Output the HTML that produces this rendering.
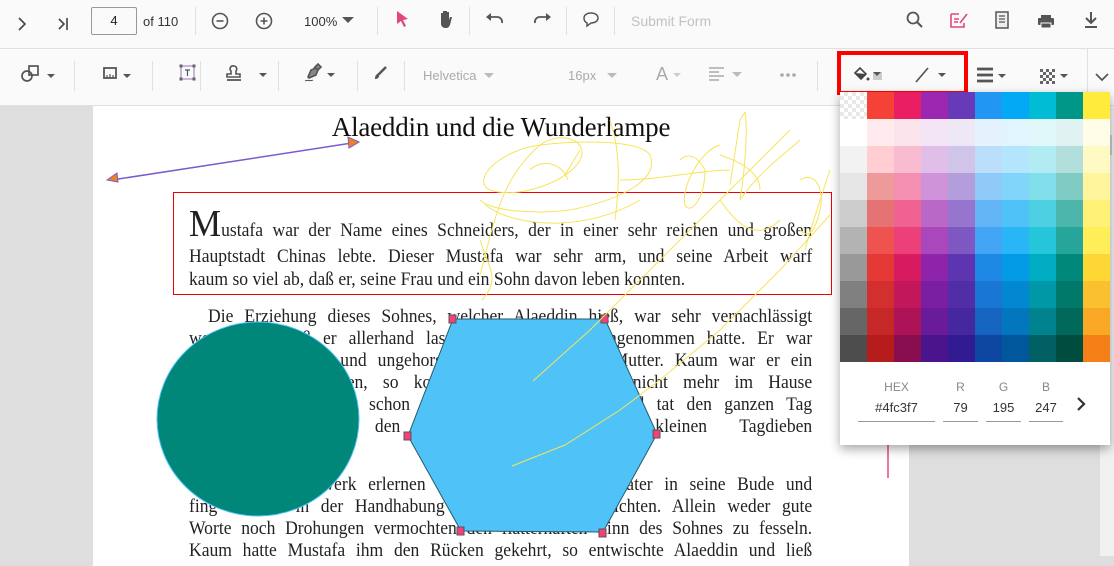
<!DOCTYPE html>
<html><head><meta charset="utf-8"><style>
*{margin:0;padding:0;box-sizing:border-box}
body{width:1114px;height:556px;overflow:hidden;background:#dedede;font-family:"Liberation Sans",sans-serif;position:relative}
.tb1{position:absolute;left:0;top:0;width:1114px;height:49px;background:#fafafa;border-bottom:1px solid #e0e0e0}
.tb2{position:absolute;left:0;top:49px;width:1114px;height:57px;background:#fafafa;border-bottom:1px solid #e0e0e0}
.sep{position:absolute;width:1px;background:#e0e0e0}
.t{position:absolute;font-size:13px;color:#333}
.ic{position:absolute}
.page{position:absolute;left:93px;top:106px;width:816px;height:460px;background:#fff}
.ln{position:absolute;left:189px;width:656px;transform:scaleX(0.95);transform-origin:0 0;font-family:"Liberation Serif",serif;font-size:18.5px;color:#222;text-align:justify;text-align-last:justify;white-space:nowrap;line-height:22px}
.nl{text-align-last:left}
.pal{position:absolute;left:840px;top:92px;width:270px;height:353px;background:#fff;box-shadow:0 4px 10px rgba(0,0,0,.35)}
.grid{display:grid;grid-template-columns:repeat(10,27px);grid-auto-rows:27px}
.lab{position:absolute;font-size:12px;color:#888;text-align:center}
.val{position:absolute;font-size:13px;color:#333;text-align:center;border-bottom:1px solid #999;padding-bottom:6px}
</style></head><body>
<div class="tb1">
<svg class="ic" style="left:14px;top:12px" width="100" height="24"><path d="M5 6l6 6-6 6" stroke="#444" stroke-width="1.6" fill="none"/><path d="M45 7l5 5-5 5M53 6v12" stroke="#444" stroke-width="1.6" fill="none"/></svg>
<div style="position:absolute;left:91px;top:7px;width:46px;height:28px;border:1px solid #999;border-radius:2px;font-size:13px;text-align:center;line-height:26px;color:#222">4</div>
<div class="t" style="left:143px;top:14px">of 110</div>
<div class="sep" style="left:195px;top:7px;height:28px"></div>
<svg class="ic" style="left:210px;top:10px" width="70" height="22"><circle cx="10" cy="11" r="7.5" stroke="#555" stroke-width="1.6" fill="none"/><path d="M6.5 11h7" stroke="#555" stroke-width="1.6"/><circle cx="54" cy="11" r="7.5" stroke="#555" stroke-width="1.6" fill="none"/><path d="M50.5 11h7M54 7.5v7" stroke="#555" stroke-width="1.6"/></svg>
<div class="t" style="left:304px;top:14px">100%</div>
<svg class="ic" style="left:342px;top:17px" width="14" height="8"><path d="M0 0h12l-6 6z" fill="#555"/></svg>
<div class="sep" style="left:377px;top:7px;height:28px"></div>
<svg class="ic" style="left:395px;top:10px" width="16" height="20"><path d="M2 1l11 8-5 1 3 6-2 1-3-6-4 3z" fill="#e3467c"/></svg>
<svg class="ic" style="left:437px;top:9px" width="18" height="20"><path d="M4 9V4h2v5V2h2v7V2h2v7V3h2v8l1-3h2l-2 8c-1 2-2 3-4 3H8c-2 0-4-2-4-4z" fill="#555"/></svg>
<div class="sep" style="left:469px;top:7px;height:28px"></div>
<svg class="ic" style="left:485px;top:12px" width="70" height="16"><path d="M4 5h9a5 5 0 0 1 4 6" stroke="#555" stroke-width="1.8" fill="none"/><path d="M1 5l5-4v8z" fill="#555"/><path d="M63 5h-9a5 5 0 0 0-4 6" stroke="#555" stroke-width="1.8" fill="none"/><path d="M66 5l-5-4v8z" fill="#555"/></svg>
<div class="sep" style="left:566px;top:7px;height:28px"></div>
<svg class="ic" style="left:582px;top:11px" width="18" height="18"><path d="M9 2c4 0 7 2 7 5s-3 5-7 5l-4 3v-3c-2-1-3-3-3-5 0-3 3-5 7-5z" stroke="#555" stroke-width="1.5" fill="none"/></svg>
<div class="sep" style="left:614px;top:7px;height:28px"></div>
<div class="t" style="left:631px;top:13px;color:#c2c2c2;font-size:14px">Submit Form</div>
<svg class="ic" style="left:905px;top:10px" width="200" height="22"><circle cx="8" cy="8" r="5.5" stroke="#555" stroke-width="1.8" fill="none"/><path d="M12 12l5 5" stroke="#555" stroke-width="2"/>
<path d="M46 4h8M46 4v13h13v-4" stroke="#e3467c" stroke-width="1.6" fill="none"/><path d="M49 9h5M49 12h4M55 13l7-9" stroke="#e3467c" stroke-width="1.6"/>
<rect x="91" y="2" width="12" height="16" stroke="#555" stroke-width="1.5" fill="#eee"/><path d="M94 6h6M94 9h6M94 12h6" stroke="#555" stroke-width="1.2"/>
<path d="M136 5h10v3h-10z" fill="#555"/><rect x="133" y="8" width="16" height="7" rx="1" fill="#555"/><rect x="136" y="13" width="10" height="5" fill="#555" stroke="#fafafa"/>
<path d="M186 2v10M181 8l5 5 5-5" stroke="#555" stroke-width="2" fill="none"/><path d="M180 17h12" stroke="#555" stroke-width="2"/></svg>
</div>
<div class="tb2">
<svg class="ic" style="left:20px;top:14px" width="40" height="22"><circle cx="7" cy="13" r="5" stroke="#555" stroke-width="1.7" fill="none"/><rect x="9" y="3" width="9" height="9" stroke="#555" stroke-width="1.7" fill="none"/><path d="M27 11h8l-4 4z" fill="#555"/></svg>
<div class="sep" style="left:74px;top:12px;height:30px"></div>
<svg class="ic" style="left:103px;top:17px" width="40" height="16"><rect x="1" y="2" width="12" height="10" stroke="#555" stroke-width="1.8" fill="none"/><path d="M4 12V9M7 12V8M10 12V9" stroke="#555" stroke-width="1.2"/><path d="M20 8h8l-4 4z" fill="#555"/></svg>
<div class="sep" style="left:152px;top:12px;height:30px"></div>
<svg class="ic" style="left:179px;top:15px" width="18" height="18"><rect x="2" y="2" width="13" height="13" stroke="#9b70c0" stroke-width="1" fill="none"/><path d="M6 6h5M8.5 6v6" stroke="#555" stroke-width="1.2"/><rect x="0.5" y="0.5" width="3" height="3" fill="#666"/><rect x="13.5" y="0.5" width="3" height="3" fill="#666"/><rect x="0.5" y="13.5" width="3" height="3" fill="#666"/><rect x="13.5" y="13.5" width="3" height="3" fill="#666"/></svg>
<div class="sep" style="left:200px;top:12px;height:30px"></div>
<svg class="ic" style="left:224px;top:14px" width="65" height="22"><path d="M10 3a3 3 0 0 1 2 5v3h4v3H3v-3h4V8a3 3 0 0 1 3-5z" stroke="#555" stroke-width="1.6" fill="none"/><path d="M3 17h14" stroke="#555" stroke-width="1.8"/><path d="M35 10h8l-4 4z" fill="#555"/></svg>
<div class="sep" style="left:278px;top:12px;height:30px"></div>
<svg class="ic" style="left:302px;top:14px" width="60" height="22"><path d="M6 14l3-7 5-2 2 2-2 5-7 3zM12 5l4-4 3 3-4 4" stroke="#555" stroke-width="1.6" fill="#888"/><path d="M3 18c3-2 5 1 8-1" stroke="#555" stroke-width="1"/><path d="M25 10h8l-4 4z" fill="#555"/></svg>
<div class="sep" style="left:357px;top:12px;height:30px"></div>
<svg class="ic" style="left:373px;top:16px" width="16" height="16"><path d="M13 2L5 10" stroke="#555" stroke-width="2.5"/><path d="M5 9c-2 0-3 2-3 5 2 0 4-1 4-3z" fill="#555"/></svg>
<div class="sep" style="left:404px;top:12px;height:30px"></div>
<div class="t" style="left:423px;top:19px;color:#aaa">Helvetica</div>
<svg class="ic" style="left:484px;top:24px" width="10" height="6"><path d="M0 0h10l-5 5z" fill="#bbb"/></svg>
<div class="t" style="left:568px;top:19px;color:#aaa">16px</div>
<svg class="ic" style="left:607px;top:24px" width="10" height="6"><path d="M0 0h10l-5 5z" fill="#bbb"/></svg>
<div class="t" style="left:656px;top:15px;color:#aaa;font-size:18px">A</div>
<svg class="ic" style="left:673px;top:24px" width="8" height="6"><path d="M0 0h8l-4 4z" fill="#ccc"/></svg>
<svg class="ic" style="left:708px;top:17px" width="50" height="16"><path d="M1 2h15M1 6h10M1 10h15M1 14h10" stroke="#aaa" stroke-width="1.4"/><path d="M24 6h10l-5 5z" fill="#bbb"/></svg>
<svg class="ic" style="left:778px;top:23px" width="30" height="6"><circle cx="4" cy="3" r="1.8" fill="#aaa"/><circle cx="10" cy="3" r="1.8" fill="#aaa"/><circle cx="16" cy="3" r="1.8" fill="#aaa"/></svg>
<div class="sep" style="left:817px;top:12px;height:30px"></div>
<svg class="ic" style="left:852px;top:16px" width="30" height="20"><path d="M3 8l5-5 6 6-5 5z" stroke="#444" stroke-width="1.6" fill="none"/><path d="M3 8l6 6 5-5z" fill="#444"/><circle cx="16" cy="14" r="1.5" fill="#444"/><rect x="21" y="7" width="13" height="8" fill="#ccc"/></svg>
<svg class="ic" style="left:871px;top:23px" width="14" height="8"><path d="M2 0h8l-4 4z" fill="#555"/></svg>
<svg class="ic" style="left:914px;top:17px" width="34" height="18"><path d="M2 16L14 2" stroke="#555" stroke-width="1.7"/><path d="M24 7h8l-4 4z" fill="#555"/></svg>
<div style="position:absolute;left:837px;top:2px;width:131px;height:44px;border:4px solid #f00"></div>
<svg class="ic" style="left:975px;top:18px" width="34" height="18"><path d="M2 2h16M2 8h16M2 14h16" stroke="#555" stroke-width="2.8"/><path d="M23 7h8l-4 4z" fill="#555"/></svg>
<svg class="ic" style="left:1038px;top:18px" width="34" height="18"><g fill="#666"><rect x="2" y="2" width="3" height="3"/><rect x="8" y="2" width="3" height="3"/><rect x="14" y="2" width="3" height="3"/><rect x="5" y="5" width="3" height="3"/><rect x="11" y="5" width="3" height="3"/><rect x="2" y="8" width="3" height="3"/><rect x="8" y="8" width="3" height="3"/><rect x="14" y="8" width="3" height="3"/><rect x="5" y="11" width="3" height="3"/><rect x="11" y="11" width="3" height="3"/><rect x="2" y="14" width="3" height="3"/><rect x="8" y="14" width="3" height="3"/><rect x="14" y="14" width="3" height="3"/></g><path d="M22 7h8l-4 4z" fill="#555"/></svg>
<div class="sep" style="left:1087px;top:0px;height:57px"></div>
<svg class="ic" style="left:1094px;top:22px" width="16" height="12"><path d="M2 3l6 6 6-6" stroke="#555" stroke-width="1.7" fill="none"/></svg>
</div>
<div style="position:absolute;left:1100px;top:106px;width:14px;height:450px;background:#f1f1f1"></div>
<div style="position:absolute;left:1106px;top:135px;width:6px;height:20px;background:#ccc"></div>
<div class="page"></div>
<div style="position:absolute;left:0;width:1002px;top:112px;text-align:center;font-family:'Liberation Serif',serif;font-size:27px;color:#111;letter-spacing:-0.2px">Alaeddin und die Wunderlampe</div>
<div style="position:absolute;left:173px;top:192px;width:659px;height:103px;border:1px solid #e00"></div>
<div class="ln" style="top:213px"><span style="font-size:38px;line-height:22px">M</span>ustafa war der Name eines Schneiders, der in einer sehr reichen und großen</div>
<div class="ln" style="top:246px">Hauptstadt Chinas lebte. Dieser Mustafa war sehr arm, und seine Arbeit warf</div>
<div class="ln nl" style="top:269px">kaum so viel ab, daß er, seine Frau und ein Sohn davon leben konnten.</div>
<div class="ln" style="top:306px;text-indent:20px">Die Erziehung dieses Sohnes, welcher Alaeddin hieß, war sehr vernachlässigt</div>
<div class="ln" style="top:328px">worden, so daß er allerhand lasterhafte Neigungen angenommen hatte. Er war</div>
<div class="ln" style="top:350px">boshaft, halsstarrig und ungehorsam gegen Vater und Mutter. Kaum war er ein</div>
<div class="ln" style="top:372px">wenig herangewachsen, so konnten ihn seine Eltern nicht mehr im Hause</div>
<div class="ln" style="top:394px">zurückhalten. Er ging schon am frühen Morgen aus und tat den ganzen Tag</div>
<div class="ln" style="top:416px">nichts, als auf den Straßen mit andern kleinen Tagdieben</div>
<div class="ln" style="top:474px">Als er ein Handwerk erlernen sollte, nahm ihn sein Vater in seine Bude und</div>
<div class="ln" style="top:496px">fing an, ihn in der Handhabung der Nadel zu unterrichten. Allein weder gute</div>
<div class="ln" style="top:518px">Worte noch Drohungen vermochten den flatterhaften Sinn des Sohnes zu fesseln.</div>
<div class="ln" style="top:540px">Kaum hatte Mustafa ihm den Rücken gekehrt, so entwischte Alaeddin und ließ</div>
<svg style="position:absolute;left:0;top:0" width="1114" height="556">
<path d="M112 180L352 143" stroke="#7b5ccc" stroke-width="1.5"/>
<path d="M107 180l10-7 1 9z" fill="#f08020" stroke="#7b5ccc"/>
<path d="M359 142l-11-5 1 11z" fill="#f08020" stroke="#7b5ccc"/>
<ellipse cx="258" cy="419" rx="101" ry="97" fill="#00877a" stroke="#4fc3f7"/>
<path d="M453 319H605L657 434L603 532L461 531L408 436Z" fill="#4fc3f7" stroke="#245a6a" stroke-width="1"/>
<g fill="#f4417a" stroke="#555" stroke-width="1"><rect x="449" y="315" width="7" height="8"/><rect x="601" y="315" width="7" height="8"/><rect x="653" y="430" width="7" height="8"/><rect x="404" y="432" width="7" height="8"/><rect x="457" y="527" width="7" height="8"/><rect x="599" y="529" width="7" height="8"/></g>
<g stroke="#f7e45a" stroke-width="1" fill="none">
<path d="M533 381L590 330 630 290 700 220 760 160 790 130"/>
<path d="M512 466L565 445 620 410 660 380 720 330 780 270 830 215"/>
<path d="M480 275C495 220 500 180 540 145C560 130 590 140 580 160C570 180 520 200 490 190C470 180 500 150 540 145C580 140 640 140 650 155C660 180 620 200 570 210C530 215 490 210 480 200"/>
<path d="M485 205C520 230 590 230 640 200M530 170C540 160 560 160 568 180M565 175L580 150M610 120C620 150 620 180 615 220M620 180C660 180 700 170 730 170"/>
<path d="M680 160C690 150 700 160 705 170C705 200 690 215 685 205C680 190 700 150 720 145M720 155C735 160 760 170 760 190M730 185L740 120 745 112M745 112C748 130 745 170 740 200C760 170 790 150 800 140"/>
<path d="M720 200C740 230 760 240 780 220M800 180C815 170 825 190 820 210C815 230 810 240 800 230M830 170C820 200 810 230 805 250M480 240C490 270 500 280 482 300"/>
</g>
<path d="M888 445V478" stroke="#e0306a" stroke-width="1.3"/>
</svg>
<div class="pal">
<div class="grid">
<div style="background:repeating-conic-gradient(#e8e8e8 0 25%,#fff 0 50%) 0 0/8px 8px"></div><div style="background:#f44336"></div><div style="background:#e91e63"></div><div style="background:#9c27b0"></div><div style="background:#673ab7"></div><div style="background:#2196f3"></div><div style="background:#03a9f4"></div><div style="background:#00bcd4"></div><div style="background:#009688"></div><div style="background:#ffeb3b"></div>
<div style="background:#fff"></div><div style="background:#ffebee"></div><div style="background:#fce4ec"></div><div style="background:#f3e5f5"></div><div style="background:#ede7f6"></div><div style="background:#e3f2fd"></div><div style="background:#e1f5fe"></div><div style="background:#e0f7fa"></div><div style="background:#e0f2f1"></div><div style="background:#fffde7"></div>
<div style="background:#f2f2f2"></div><div style="background:#ffcdd2"></div><div style="background:#f8bbd0"></div><div style="background:#e1bee7"></div><div style="background:#d1c4e9"></div><div style="background:#bbdefb"></div><div style="background:#b3e5fc"></div><div style="background:#b2ebf2"></div><div style="background:#b2dfdb"></div><div style="background:#fff9c4"></div>
<div style="background:#e6e6e6"></div><div style="background:#ef9a9a"></div><div style="background:#f48fb1"></div><div style="background:#ce93d8"></div><div style="background:#b39ddb"></div><div style="background:#90caf9"></div><div style="background:#81d4fa"></div><div style="background:#80deea"></div><div style="background:#80cbc4"></div><div style="background:#fff59d"></div>
<div style="background:#cccccc"></div><div style="background:#e57373"></div><div style="background:#f06292"></div><div style="background:#ba68c8"></div><div style="background:#9575cd"></div><div style="background:#64b5f6"></div><div style="background:#4fc3f7"></div><div style="background:#4dd0e1"></div><div style="background:#4db6ac"></div><div style="background:#fff176"></div>
<div style="background:#b3b3b3"></div><div style="background:#ef5350"></div><div style="background:#ec407a"></div><div style="background:#ab47bc"></div><div style="background:#7e57c2"></div><div style="background:#42a5f5"></div><div style="background:#29b6f6"></div><div style="background:#26c6da"></div><div style="background:#26a69a"></div><div style="background:#ffee58"></div>
<div style="background:#999999"></div><div style="background:#e53935"></div><div style="background:#d81b60"></div><div style="background:#8e24aa"></div><div style="background:#5e35b1"></div><div style="background:#1e88e5"></div><div style="background:#039be5"></div><div style="background:#00acc1"></div><div style="background:#00897b"></div><div style="background:#fdd835"></div>
<div style="background:#808080"></div><div style="background:#d32f2f"></div><div style="background:#c2185b"></div><div style="background:#7b1fa2"></div><div style="background:#512da8"></div><div style="background:#1976d2"></div><div style="background:#0288d1"></div><div style="background:#0097a7"></div><div style="background:#00796b"></div><div style="background:#fbc02d"></div>
<div style="background:#666666"></div><div style="background:#c62828"></div><div style="background:#ad1457"></div><div style="background:#6a1b9a"></div><div style="background:#4527a0"></div><div style="background:#1565c0"></div><div style="background:#0277bd"></div><div style="background:#00838f"></div><div style="background:#00695c"></div><div style="background:#f9a825"></div>
<div style="background:#4d4d4d"></div><div style="background:#b71c1c"></div><div style="background:#880e4f"></div><div style="background:#4a148c"></div><div style="background:#311b92"></div><div style="background:#0d47a1"></div><div style="background:#01579b"></div><div style="background:#006064"></div><div style="background:#004d40"></div><div style="background:#f57f17"></div>
</div>
<div class="lab" style="left:18px;top:288px;width:77px">HEX</div>
<div class="lab" style="left:103px;top:288px;width:35px">R</div>
<div class="lab" style="left:146px;top:288px;width:35px">G</div>
<div class="lab" style="left:189px;top:288px;width:34px">B</div>
<div class="val" style="left:18px;top:308px;width:77px">#4fc3f7</div>
<div class="val" style="left:103px;top:308px;width:35px">79</div>
<div class="val" style="left:146px;top:308px;width:35px">195</div>
<div class="val" style="left:189px;top:308px;width:34px">247</div>
<svg class="ic" style="left:234px;top:303px" width="14" height="18"><path d="M4 3l6 6-6 6" stroke="#333" stroke-width="2.2" fill="none"/></svg>
</div>
</body></html>
